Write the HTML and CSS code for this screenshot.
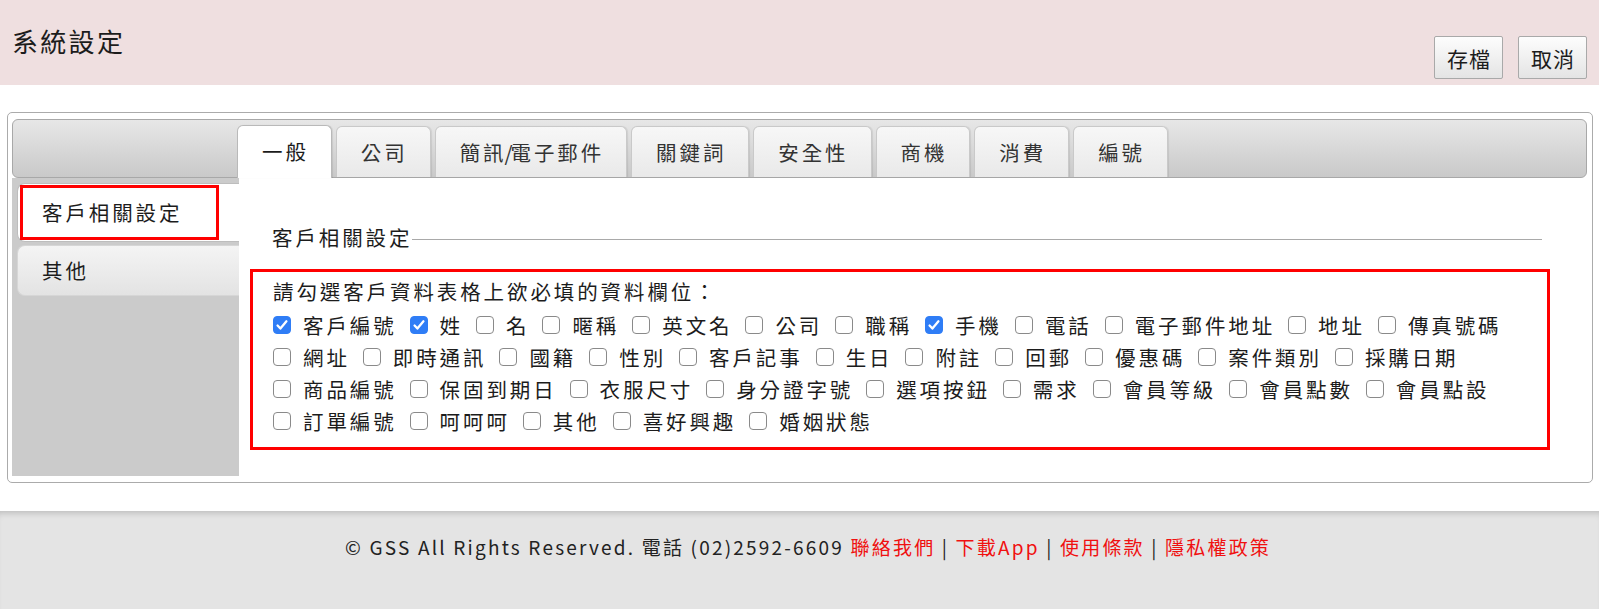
FILE: index.html
```html
<!DOCTYPE html>
<html lang="zh-Hant">
<head>
  <meta charset="UTF-8">
  <meta name="viewport" content="width=device-width, initial-scale=1.0">
  <title>系統設定</title>
  <link rel="stylesheet" href="styles.css">
</head>
<body>
  <header class="page-head">
    <h1 class="page-title">系統設定</h1>
    <div class="head-actions">
      <button class="btn">存檔</button>
      <button class="btn">取消</button>
    </div>
  </header>

  <main class="page-main">
    <div class="panel">
      <div class="tab-bar">
        <div class="tab active">一般</div>
        <div class="tab">公司</div>
        <div class="tab">簡訊<span class="slash">/</span>電子郵件</div>
        <div class="tab">關鍵詞</div>
        <div class="tab">安全性</div>
        <div class="tab">商機</div>
        <div class="tab">消費</div>
        <div class="tab">編號</div>
      </div>

      <div class="panel-body">
        <div class="side-nav">
          <div class="side-item active"><span class="mark">客戶相關設定</span></div>
          <div class="side-item">其他</div>
        </div>

        <div class="content">
          <div class="legend">客戶相關設定</div>
          <div class="required-box">
            <div class="hint">請勾選客戶資料表格上欲必填的資料欄位：</div>
            <div class="field-list" id="fieldList"></div>
          </div>
        </div>
      </div>
    </div>
  </main>

  <footer class="page-foot">
    © GSS All Rights Reserved. 電話 (02)2592-6609
    <a href="#">聯絡我們</a> | <a href="#">下載App</a> | <a href="#">使用條款</a> | <a href="#">隱私權政策</a>
  </footer>

  <script>
    const fields = [
      ['客戶編號', true], ['姓', true], ['名'], ['暱稱'], ['英文名'], ['公司'], ['職稱'],
      ['手機', true], ['電話'], ['電子郵件地址'], ['地址'], ['傳真號碼'],
      ['網址'], ['即時通訊'], ['國籍'], ['性別'], ['客戶記事'], ['生日'], ['附註'],
      ['回郵'], ['優惠碼'], ['案件類別'], ['採購日期'],
      ['商品編號'], ['保固到期日'], ['衣服尺寸'], ['身分證字號'], ['選項按鈕'], ['需求'],
      ['會員等級'], ['會員點數'], ['會員點設'],
      ['訂單編號'], ['呵呵呵'], ['其他'], ['喜好興趣'], ['婚姻狀態']
    ];

    const list = document.getElementById('fieldList');
    fields.forEach(([name, checked]) => {
      const label = document.createElement('label');
      label.className = 'field';
      const box = document.createElement('input');
      box.type = 'checkbox';
      box.checked = !!checked;
      const text = document.createElement('span');
      text.textContent = name;
      label.appendChild(box);
      label.appendChild(text);
      list.appendChild(label);
    });
  </script>
</body>
</html>
```

FILE: styles.css
```css
* { box-sizing: border-box; }

body {
  margin: 0;
  font-family: "Noto Sans CJK TC", "Noto Sans", sans-serif;
  color: #1c1c1c;
  background: #fff;
}

/* header */
.page-head {
  height: 85px;
  background: #efdfe0;
  display: flex;
  justify-content: space-between;
  align-items: flex-start;
  padding: 0 12px;
}
.page-title {
  margin: 0;
  padding-top: 23px;
  font-size: 26px;
  font-weight: normal;
  line-height: 36px;
  letter-spacing: 2.3px;
}
.head-actions {
  margin-top: 36px;
  display: flex;
  gap: 15px;
}
.btn {
  height: 43px;
  padding: 0 11px 0 12px;
  font-family: inherit;
  font-size: 21px;
  letter-spacing: 1px;
  color: #1c1c1c;
  background: linear-gradient(#fdfdfd, #e4e4e4);
  border: 1px solid #a9a9a9;
  border-radius: 2px;
  cursor: pointer;
}

/* main panel */
.page-main { padding: 27px 6px 28px 7px; }
.panel {
  border: 1px solid #ababab;
  border-radius: 5px;
  padding: 6px 5px 6px 4px;
}

.tab-bar {
  height: 59px;
  display: flex;
  align-items: flex-end;
  gap: 4px;
  padding-left: 224px;
  background: linear-gradient(#e7e7e7, #c9c9c9);
  border: 1px solid #a8a8a8;
  border-radius: 6px;
}
.tab {
  height: 51px;
  padding: 0 22px 0 24px;
  font-size: 20.5px;
  letter-spacing: 2.9px;
  line-height: 50px;
  color: #333;
  background: linear-gradient(#f7f7f7, #e9e9e9);
  border: 1px solid #c9c9c9;
  border-bottom: none;
  border-radius: 6px 6px 0 0;
  box-shadow: 1px 0 1px rgba(0,0,0,0.08);
}
.tab .slash { letter-spacing: 0; margin: 0 -2px; }
.tab.active {
  position: relative;
  height: 53px;
  margin-bottom: -1px;
  background: #fff;
  border-color: #b9b9b9;
  color: #1c1c1c;
}

.panel-body { display: flex; }

.side-nav {
  width: 227px;
  flex-shrink: 0;
  background: #cbcbcb;
  padding: 5px 0 0 5px;
}
.side-item {
  height: 51px;
  margin-top: 3px;
  padding-left: 24px;
  font-size: 20.5px;
  letter-spacing: 2.9px;
  line-height: 49px;
  background: linear-gradient(#f4f4f4, #e3e3e3);
  border: 1px solid #d6d6d6;
  border-right: none;
  border-radius: 8px 0 0 8px;
}
.side-item.active {
  height: 59px;
  margin-top: 0;
  padding: 1px 0 0 2px;
  background: #fff;
  border-color: #bdbdbd;
}
.mark {
  display: inline-block;
  height: 55px;
  padding: 0 34px 0 19px;
  line-height: 49px;
  border: 3px solid #ff0000;
}

.content {
  flex: 1;
  background: #fff;
  padding: 43px 37px 26px 11px;
}
.legend {
  display: flex;
  align-items: center;
  margin: 0 8px 16px 22px;
  font-size: 20.5px;
  letter-spacing: 2.9px;
  line-height: 32px;
}
.legend::after {
  content: "";
  flex: 1;
  height: 1px;
  margin-top: 4px;
  background: #a9a9a9;
}

.required-box {
  border: 3px solid #ff0000;
  padding: 3px 16px 10px 20px;
  font-size: 20.5px;
  letter-spacing: 2.9px;
}
.hint { line-height: 32px; margin-bottom: 2px; }

.field-list {
  display: flex;
  flex-wrap: wrap;
  column-gap: 13px;
}
.field {
  display: flex;
  align-items: center;
  gap: 12px;
  height: 32px;
}
.field input {
  appearance: none;
  -webkit-appearance: none;
  width: 18px;
  height: 18px;
  margin: 0;
  border: 1px solid #8a8a8a;
  border-radius: 4px;
  background: #fff;
}
.field input:checked {
  border-color: #2f7df6;
  background: #2f7df6 url("data:image/svg+xml,%3Csvg xmlns='http://www.w3.org/2000/svg' viewBox='0 0 18 18'%3E%3Cpath d='M4 9.6l3.2 3.4 6.8-8.2' fill='none' stroke='white' stroke-width='2.6' stroke-linecap='round' stroke-linejoin='round'/%3E%3C/svg%3E") center / 100% no-repeat;
}

/* footer */
.page-foot {
  height: 98px;
  padding: 21px 0 0 17px;
  background: #e4e4e4;
  box-shadow: inset 0 6px 6px -4px rgba(0,0,0,0.18);
  text-align: center;
  font-size: 19px;
  letter-spacing: 2.2px;
  line-height: 30px;
  color: #222;
}
.page-foot a { color: #f01010; text-decoration: none; }
```
